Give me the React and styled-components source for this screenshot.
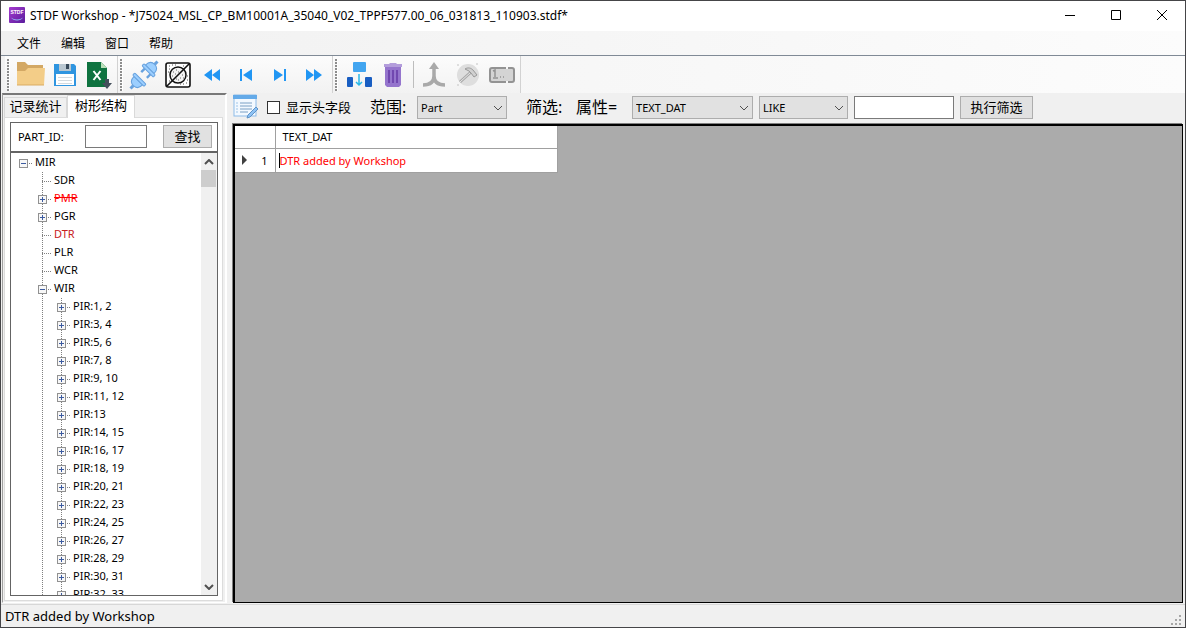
import React from "react";
import styled, { createGlobalStyle } from "styled-components";

const pirItems = [
  "1, 2", "3, 4", "5, 6", "7, 8", "9, 10", "11, 12", "13", "14, 15",
  "16, 17", "18, 19", "20, 21", "22, 23", "24, 25", "26, 27", "28, 29",
  "30, 31", "32, 33",
];

const treeItems = [
  { label: "MIR", depth: 0, toggle: "minus" },
  { label: "SDR", depth: 1 },
  { label: "PMR", depth: 1, toggle: "plus", color: "#ff0000", removed: true },
  { label: "PGR", depth: 1, toggle: "plus" },
  { label: "DTR", depth: 1, color: "#c8201c" },
  { label: "PLR", depth: 1 },
  { label: "WCR", depth: 1 },
  { label: "WIR", depth: 1, toggle: "minus" },
  ...pirItems.map((n) => ({ label: `PIR:${n}`, depth: 2, toggle: "plus" })),
];

const LogoIcon = () => (
  <svg width="16" height="16" viewBox="0 0 16 16">
    <defs>
      <linearGradient id="logo" x1="0" y1="0" x2="1" y2="1">
        <stop offset="0" stopColor="#a63bd0" />
        <stop offset="1" stopColor="#5a1c9c" />
      </linearGradient>
    </defs>
    <rect width="16" height="16" rx="1" fill="url(#logo)" />
    <text x="8" y="7" fill="#fff" fontSize="5" fontWeight="700" textAnchor="middle" fontFamily="Liberation Sans, sans-serif">STDF</text>
    <path d="M2 10.5c3 2.6 9 2.6 12 0-2 4-10 4-12 0z" fill="#8fb4f0" />
  </svg>
);

const FolderIcon = () => (
  <svg width="30" height="28" viewBox="0 0 30 28">
    <path d="M1 1h8l3 3h15v20H1z" fill="#d3a864" />
    <path d="M1 24V10h8l3-3h17l-1 17z" fill="#f3cd88" />
    <path d="M1 24h27" stroke="#d9ab63" />
  </svg>
);

const SaveIcon = () => (
  <svg width="24" height="24" viewBox="0 0 24 24">
    <path d="M1 1h20l2 2v20H1z" fill="#2f95e0" />
    <path d="M6 1h12v7H6z" fill="#b9c7d1" />
    <path d="M13 1h3v5h-3z" fill="#36495a" />
    <path d="M3 11h18v11H3z" fill="#fff" />
    <path d="M5 14.5h14M5 17.5h14M5 20.500h14" stroke="#d3dadf" />
  </svg>
);

const ExcelIcon = () => (
  <svg width="26" height="28" viewBox="0 0 26 28">
    <path d="M1 1h14l6 6v19H1z" fill="#0f7340" />
    <path d="M15 1l6 6h-6z" fill="#b9dfb8" />
    <path d="M7.500 10l7 9M14.500 10l-7 9" stroke="#fff" strokeWidth="2" />
    <path d="M19 18h4v4h3l-5 6-5-6h3z" fill="#44505c" />
  </svg>
);

const PlugIcon = () => (
  <svg width="30" height="30" viewBox="0 0 30 30" fill="#9ccfff" stroke="#68a2de">
    <g transform="translate(20 10) rotate(45)">
      <path d="M0-8v-4" strokeWidth="3" />
      <path d="M-4 2v5M4 2v5" strokeWidth="2.400" />
      <path d="M-6-1c0-5 2-7 6-7s6 2 6 7z" />
      <rect x="-8" y="-1" width="16" height="3" rx="1" />
    </g>
    <g transform="translate(10 20) rotate(45)">
      <path d="M0 8v4" strokeWidth="3" />
      <path d="M-6 1c0 5 2 7 6 7s6-2 6-7z" />
      <rect x="-8" y="-2" width="16" height="3" rx="1" />
    </g>
  </svg>
);

const WaferIcon = () => (
  <svg width="26" height="26" viewBox="0 0 26 26" fill="none" stroke="#111">
    <rect x="1" y="1" width="24" height="24" rx="2" strokeWidth="1.600" fill="#fff" />
    <circle cx="13" cy="13" r="8" strokeWidth="1.500" fill="#f4f4f4" />
    <path d="M8 10h1M11 8h1M10 12h1M13 10h1M7 14h1M15 16h1M17 13h1M13 18h1M18 16h1M11 17h1" stroke="#666" />
    <path d="M2 24L24 2" strokeWidth="1.600" />
    <path d="M4 4h1M7 3h1M4 7h1M10 3h1M3 10h1M18 4h1M22 18h1M21 21h1M18 22h1M22 14h1M4 19h1M15 22h1" stroke="#555" />
  </svg>
);

const arrowPaths = {
  first: "M9 3v12L1 9zM17 3v12L9 9z",
  prev: "M3 3h2v12H3zM15 3v12L6 9z",
  next: "M13 3h2v12h-2zM3 3v12l9-6z",
  last: "M1 3v12l8-6zM9 3v12l8-6z",
};

const ArrowIcon = ({ kind }) => (
  <svg width="18" height="18" viewBox="0 0 18 18">
    <path d={arrowPaths[kind]} fill="#2196f3" />
  </svg>
);

const SplitIcon = () => (
  <svg width="26" height="26" viewBox="0 0 26 26">
    <rect x="7" y="0" width="13" height="10" rx="1" fill="#42a5f0" />
    <rect x="1" y="15" width="6" height="10" rx="1" fill="#195ec2" />
    <rect x="19" y="15" width="7" height="10" rx="1" fill="#195ec2" />
    <path d="M13 12v11M10 20l3 3 3-3" fill="none" stroke="#28b8e8" strokeWidth="1.500" />
  </svg>
);

const TrashIcon = () => (
  <svg width="20" height="26" viewBox="0 0 20 26">
    <path d="M2 4h16v19l-2 2H4l-2-2z" fill="#9575cd" />
    <path d="M7 1h6l1 1h5v3H1V2h5z" fill="#b39ddb" />
    <path d="M6 8v13M10 8v13M14 8v13" stroke="#7148b0" strokeWidth="2" />
  </svg>
);

const MergeIcon = () => (
  <svg width="24" height="26" viewBox="0 0 24 26" fill="none" stroke="#a9a9a9" strokeWidth="3.500">
    <path d="M12 5v9c0 6-4 9-11 9M12 14c0 6 4 9 11 9" />
    <path d="M12 0l5 7H7z" fill="#a9a9a9" stroke="none" />
  </svg>
);

const HammerIcon = () => (
  <svg width="24" height="24" viewBox="0 0 24 24" fill="none">
    <circle cx="12" cy="12" r="11" fill="#dedede" />
    <path d="M4 19L15 9" stroke="#a8a8a8" strokeWidth="3" />
    <path d="M4 19L15 9" stroke="#e8e8e8" />
    <path d="M9 6c3-2 6-1 8 1l4 5-3 2-3-4-2-2z" fill="#d0d0d0" stroke="#999" />
    <path d="M1 2h2M20 1h2M1 22h2" stroke="#c4c4c4" />
  </svg>
);

const FieldIcon = () => (
  <svg width="28" height="18" viewBox="0 0 28 18" fill="#d4d4d4" stroke="#939393" strokeWidth="2">
    <rect x="2" y="2" width="24" height="14" rx="2" />
    <path d="M5 5l2-1v7M5 12h5M12 11h1M15 11h1" strokeWidth="1.500" fill="none" />
    <path d="M19 1v2M19 15v2" stroke="#f6f6f6" />
  </svg>
);

const EditNoteIcon = () => (
  <svg width="26" height="26" viewBox="0 0 26 26">
    <rect x="1" y="1" width="22" height="21" fill="#f3f9ff" stroke="#8dbbe8" />
    <path d="M0 1h24v4H0z" fill="#64aae8" />
    <path d="M7 9h12M7 12h12M7 15h12M7 18h8" stroke="#7aa0c4" />
    <path d="M3 9h2M3 12h2M3 15h2M3 18h2" stroke="#9fc5e8" />
    <path d="M14 24l1-3 8-8 2 2-8 8z" fill="#8fc3f5" stroke="#5f94c8" />
  </svg>
);

const ToggleIcon = ({ kind }) => (
  <svg width="9" height="9" viewBox="0 0 9 9" shapeRendering="crispEdges">
    <path d="M0 0h9v9H0z" fill="#919191" />
    <path d="M1 1h7v7H1z" fill="#f7f7f7" />
    <path d={kind === "plus" ? "M2 4h5v1H2zM4 2h1v5H4z" : "M2 4h5v1H2z"} fill="#3c5ba0" />
  </svg>
);

const Chevron = ({ up }) => (
  <svg width="10" height="6" viewBox="0 0 10 6" fill="none" stroke="#505050" strokeWidth={up === undefined ? 1 : 2}>
    <path d={up ? "M1 5l4-4 4 4" : "M1 1l4 4 4-4"} />
  </svg>
);

const Select = ({ label, value, $width }) => (
  <SelectBox $width={$width}>
    <SelectField aria-label={label} defaultValue={value}>
      <option>{value}</option>
    </SelectField>
    <Chevron />
  </SelectBox>
);

const Tool = ({ title, disabled, children }) => (
  <ToolButton type="button" aria-label={title} disabled={disabled}>
    {children}
  </ToolButton>
);

const TreeRow = ({ item }) => (
  <Row>
    {item.depth === 2 && (
      <>
        <Gap />
        <Guide />
      </>
    )}
    {item.depth === 1 && <Gap />}
    <Node $root={item.depth === 0}>
      {item.toggle && (
        <Toggle type="button" aria-label={`Toggle ${item.label}`}>
          <ToggleIcon kind={item.toggle} />
        </Toggle>
      )}
    </Node>
    <NodeLabel $color={item.color} $removed={item.removed}>{item.label}</NodeLabel>
  </Row>
);

const App = () => {
  return (
    <Window>
      <GlobalStyles />
      <TitleBar>
        <LogoIcon />
        <Title>STDF Workshop - *J75024_MSL_CP_BM10001A_35040_V02_TPPF577.00_06_031813_110903.stdf*</Title>
        <CaptionButton type="button" aria-label="Minimize">
          <svg width="11" height="11"><path d="M0 5.500h10" stroke="#000" /></svg>
        </CaptionButton>
        <CaptionButton type="button" aria-label="Maximize">
          <svg width="11" height="11"><path d="M.5.5h9v9h-9z" stroke="#000" fill="none" /></svg>
        </CaptionButton>
        <CaptionButton type="button" aria-label="Close">
          <svg width="11" height="11"><path d="M0 0l10 10M10 0L0 10" stroke="#000" /></svg>
        </CaptionButton>
      </TitleBar>

      <MenuBar>
        <MenuItem type="button">文件</MenuItem>
        <MenuItem type="button">编辑</MenuItem>
        <MenuItem type="button">窗口</MenuItem>
        <MenuItem type="button">帮助</MenuItem>
      </MenuBar>

      <ToolBar>
        <Strip>
          <Grip />
          <Tool title="Open"><FolderIcon /></Tool>
          <Tool title="Save"><SaveIcon /></Tool>
          <Tool title="Export"><ExcelIcon /></Tool>
        </Strip>
        <Strip>
          <Grip />
          <Tool title="Connect"><PlugIcon /></Tool>
          <Tool title="Wafer"><WaferIcon /></Tool>
          <Tool title="First"><ArrowIcon kind="first" /></Tool>
          <Tool title="Previous"><ArrowIcon kind="prev" /></Tool>
          <Tool title="Next"><ArrowIcon kind="next" /></Tool>
          <Tool title="Last"><ArrowIcon kind="last" /></Tool>
        </Strip>
        <Strip>
          <Grip />
          <Tool title="Split"><SplitIcon /></Tool>
          <Tool title="Delete"><TrashIcon /></Tool>
          <Separator />
          <Tool title="Merge" disabled><MergeIcon /></Tool>
          <Tool title="Build" disabled><HammerIcon /></Tool>
          <Tool title="Field" disabled><FieldIcon /></Tool>
        </Strip>
      </ToolBar>

      <Main>
        <SidePanel>
          <Tabs role="tablist">
            <Tab type="button" role="tab" aria-selected="false">记录统计</Tab>
            <Tab type="button" role="tab" aria-selected="true" $active>树形结构</Tab>
          </Tabs>
          <TabPage>
            <SearchBox>
              <SearchLabel htmlFor="part-id">PART_ID:</SearchLabel>
              <TextField id="part-id" type="text" $width={62} />
              <Button type="button" $width={49}>查找</Button>
            </SearchBox>
            <TreeBox>
              <Tree>
                {treeItems.map((item) => (
                  <TreeRow key={item.label} item={item} />
                ))}
              </Tree>
              <ScrollBar>
                <ScrollButton type="button" aria-label="Scroll up"><Chevron up /></ScrollButton>
                <Thumb />
                <ScrollButton type="button" aria-label="Scroll down"><Chevron up={false} /></ScrollButton>
              </ScrollBar>
            </TreeBox>
          </TabPage>
        </SidePanel>

        <Content>
          <FilterBar>
            <IconButton type="button" aria-label="Edit"><EditNoteIcon /></IconButton>
            <CheckLabel>
              <CheckBox type="checkbox" />
              显示头字段
            </CheckLabel>
            <FilterLabel $width={47}>范围:</FilterLabel>
            <Select label="范围" value="Part" $width={90} />
            <Spacer />
            <FilterLabel $width={50}>筛选:</FilterLabel>
            <FilterLabel $width={56}>属性=</FilterLabel>
            <FilterFields>
              <Select label="属性" value="TEXT_DAT" $width={121} />
              <Select label="条件" value="LIKE" $width={89} />
              <TextField type="text" aria-label="筛选值" $width={100} />
              <Button type="button" $width={73}>执行筛选</Button>
            </FilterFields>
          </FilterBar>
          <GridArea>
            <Grid>
              <thead>
                <tr>
                  <th />
                  <th>TEXT_DAT</th>
                </tr>
              </thead>
              <tbody>
                <tr>
                  <th scope="row">
                    <RowHead>
                      <svg width="5" height="10"><path d="M0 0l5 5-5 5z" fill="#404040" /></svg>
                      1
                    </RowHead>
                  </th>
                  <td><Editing>DTR added by Workshop</Editing></td>
                </tr>
              </tbody>
            </Grid>
          </GridArea>
        </Content>
      </Main>

      <StatusBar>
        <span>DTR added by Workshop</span>
        <svg width="11" height="11" fill="#a6a6a6" shapeRendering="crispEdges">
          <path d="M8 0h2v2H8zM4 4h2v2H4zM8 4h2v2H8zM0 8h2v2H0zM4 8h2v2H4zM8 8h2v2H8z" />
        </svg>
      </StatusBar>
    </Window>
  );
};

const GlobalStyles = createGlobalStyle`
  * {
    box-sizing: border-box;
  }

  body {
    margin: 0;
    font-family: "Noto Sans", "Noto Sans CJK SC", sans-serif;
    font-size: 12px;
    color: #000;
  }

  button, input, select {
    font: inherit;
    color: inherit;
    padding: 0;
    margin: 0;
  }

  svg {
    display: block;
    flex: none;
  }
`;

const Window = styled.div`
  display: flex;
  flex-direction: column;
  height: 100vh;
  background: #f0f0f0;
  border: 1px solid #454548;
`;

const TitleBar = styled.header`
  display: flex;
  align-items: center;
  flex: none;
  height: 30px;
  padding: 0 0 2px 8px;
  background: #fff;
`;

const Title = styled.h1`
  flex: 1;
  margin: 0 0 0 5px;
  font-size: 12px;
  font-weight: 400;
  white-space: nowrap;
`;

const CaptionButton = styled.button`
  display: flex;
  align-items: center;
  justify-content: center;
  width: 46px;
  height: 28px;
  border: none;
  background: none;
`;

const MenuBar = styled.nav`
  display: flex;
  flex: none;
  height: 25px;
  padding-left: 6px;
  background: linear-gradient(to right, #f0f0f0, #fcfcfc);
  border-bottom: 1px solid #808a96;
`;

const MenuItem = styled.button`
  width: 44px;
  border: none;
  background: none;
  font-size: 12px;
`;

const ToolBar = styled.div`
  display: flex;
  flex: none;
  height: 37px;
  padding-left: 4px;
  background: linear-gradient(to right, #f2f2f2, #fcfcfc);
`;

const Strip = styled.div`
  display: flex;
  align-items: center;
  padding: 0 1px 0 2px;
  border-right: 1px solid #d2d2d2;
  background: linear-gradient(#fcfcfc, #f2f2f2);
`;

const Grip = styled.span`
  width: 3px;
  height: 32px;
  margin-right: 4px;
  background: repeating-linear-gradient(#8d8d8d 0 2px, #f8f8f8 2px 3px);
  border-right: 1px solid #fff;
`;

const ToolButton = styled.button`
  display: flex;
  align-items: center;
  justify-content: center;
  width: 34px;
  height: 36px;
  border: none;
  background: none;
`;

const Separator = styled.span`
  width: 1px;
  height: 27px;
  margin: 0 3px;
  background: #bdbdbd;
`;

const Main = styled.main`
  display: flex;
  flex: 1;
  min-height: 0;
  gap: 5px;
  padding: 0 2px 1px 1px;
`;

const SidePanel = styled.aside`
  display: flex;
  flex-direction: column;
  flex: none;
  width: 225px;
  padding: 0 2px 1px 1px;
  border: 1px solid #a0a0a0;
  border-top: 2px solid #787878;
  border-right: 2px solid #fff;
  border-bottom: 1px solid #fff;
`;

const Tabs = styled.div`
  display: flex;
  align-items: flex-end;
  height: 22px;
`;

const Tab = styled.button`
  position: relative;
  width: ${({ $active }) => ($active ? "68px" : "63px")};
  height: ${({ $active }) => ($active ? "23px" : "20px")};
  margin-bottom: ${({ $active }) => ($active ? "-1px" : "0")};
  padding-bottom: ${({ $active }) => ($active ? "5px" : "3px")};
  border: 1px solid #d9d9d9;
  border-bottom: none;
  background: ${({ $active }) => ($active ? "#fff" : "#f0f0f0")};
  font-size: 13px;
  line-height: 16px;
  white-space: nowrap;
`;

const TabPage = styled.section`
  display: flex;
  flex-direction: column;
  flex: 1;
  min-height: 0;
  padding: 4px 4px 4px 5px;
  border: 1px solid #dcdcdc;
  background: #fff;
`;

const SearchBox = styled.form`
  display: flex;
  align-items: center;
  flex: none;
  height: 30px;
  padding: 0 5px 2px 7px;
  border: 1px solid #646464;
`;

const SearchLabel = styled.label`
  flex: 1;
  font-size: 11px;
`;

const TextField = styled.input`
  width: ${({ $width }) => $width}px;
  height: 23px;
  padding: 0 4px;
  border: 1px solid #7a7a7a;
  background: #fff;
`;

const Button = styled.button`
  width: ${({ $width }) => $width}px;
  height: 23px;
  border: 1px solid #adadad;
  background: #e1e1e1;
  font-size: 13px;
  line-height: 19px;

  ${SearchBox} & {
    margin-left: 16px;
  }
`;

const TreeBox = styled.div`
  display: flex;
  flex: 1;
  min-height: 0;
  border: 1px solid #646464;
`;

const Tree = styled.ul`
  flex: 1;
  margin: 0;
  padding: 1px 0 0 3px;
  list-style: none;
  overflow: hidden;
`;

const Row = styled.li`
  display: flex;
  height: 18px;
`;

const dots = "repeating-linear-gradient(#808080 0 1px, transparent 1px 2px)";
const dotsAcross = "repeating-linear-gradient(to right, #808080 0 1px, transparent 1px 2px)";

const Gap = styled.span`
  width: 19px;
`;

const Guide = styled.span`
  width: 19px;
  background: ${dots} 9px 0 / 1px 100% no-repeat;
`;

const Node = styled.span`
  display: flex;
  width: 19px;
  padding: 5px;
  background: ${dotsAcross} 9px 9px / 9px 1px no-repeat
    ${({ $root }) => !$root && `, ${dots} 9px 0 / 1px 100% no-repeat`};
`;

const Toggle = styled.button`
  width: 9px;
  height: 9px;
  border: none;
  background: none;
`;

const NodeLabel = styled.span`
  margin-left: 2px;
  font-size: 11px;
  line-height: 15px;
  color: ${({ $color }) => $color || "#000"};
  text-decoration: ${({ $removed }) => ($removed ? "line-through" : "none")};
`;

const ScrollBar = styled.div`
  display: flex;
  flex-direction: column;
  width: 16px;
  background: #f0f0f0;
`;

const ScrollButton = styled.button`
  display: flex;
  align-items: center;
  justify-content: center;
  width: 16px;
  height: 17px;
  border: none;
  background: none;

  &:last-child {
    margin-top: auto;
  }
`;

const Thumb = styled.div`
  width: 15px;
  height: 17px;
  background: #cdcdcd;
`;

const Content = styled.section`
  display: flex;
  flex-direction: column;
  flex: 1;
  min-width: 0;
`;

const FilterBar = styled.form`
  display: flex;
  align-items: center;
  flex: none;
  height: 31px;
  padding: 0 0 3px 1px;
`;

const IconButton = styled.button`
  border: none;
  background: none;
`;

const CheckLabel = styled.label`
  display: flex;
  align-items: center;
  gap: 6px;
  margin: 0 19px 0 8px;
  font-size: 13px;
  line-height: 20px;
  white-space: nowrap;
`;

const CheckBox = styled.input`
  appearance: none;
  width: 13px;
  height: 13px;
  border: 1px solid #333;
  background: #fff;
`;

const FilterLabel = styled.span`
  flex: none;
  width: ${({ $width }) => $width}px;
  font-size: 16px;
  line-height: 22px;
  white-space: nowrap;
`;

const Spacer = styled.span`
  width: 19px;
`;

const FilterFields = styled.div`
  display: flex;
  gap: 6px;
`;

const SelectBox = styled.div`
  position: relative;
  flex: none;
  width: ${({ $width }) => $width}px;

  svg {
    position: absolute;
    top: 9px;
    right: 4px;
    pointer-events: none;
  }
`;

const SelectField = styled.select`
  appearance: none;
  display: block;
  width: 100%;
  height: 23px;
  padding: 0 3px;
  border: 1px solid #adadad;
  border-radius: 0;
  background: #e1e1e1;
  font-size: 11px;
`;

const GridArea = styled.div`
  flex: 1;
  min-height: 0;
  border: 1px solid #000;
  border-width: 2px 1px 1px 2px;
  background: #ababab;
  box-shadow: -1px -1px 0 #808080;
  margin-left: 1px;
  overflow: hidden;
`;

const Grid = styled.table`
  border-collapse: collapse;
  table-layout: fixed;
  width: 323px;
  background: #fff;
  font-size: 11px;

  th, td {
    height: 24px;
    padding: 0 3px;
    border: solid #a0a0a0;
    border-width: 0 1px 1px 0;
    font-weight: 400;
    text-align: left;
  }

  th:first-child {
    width: 40px;
  }

  thead th {
    height: 22px;
    padding-left: 7px;
  }
`;

const RowHead = styled.span`
  display: flex;
  align-items: center;
  justify-content: space-between;
  padding: 0 4px;
`;

const Editing = styled.span`
  border-left: 1px solid #000;
  color: #ff0000;
`;

const StatusBar = styled.footer`
  display: flex;
  align-items: center;
  justify-content: space-between;
  flex: none;
  height: 23px;
  padding: 0 3px 0 4px;
  border-top: 1px solid #d7d7d7;
  font-size: 13px;

  svg {
    align-self: flex-end;
    margin-bottom: 1px;
  }
`;

export default App;
